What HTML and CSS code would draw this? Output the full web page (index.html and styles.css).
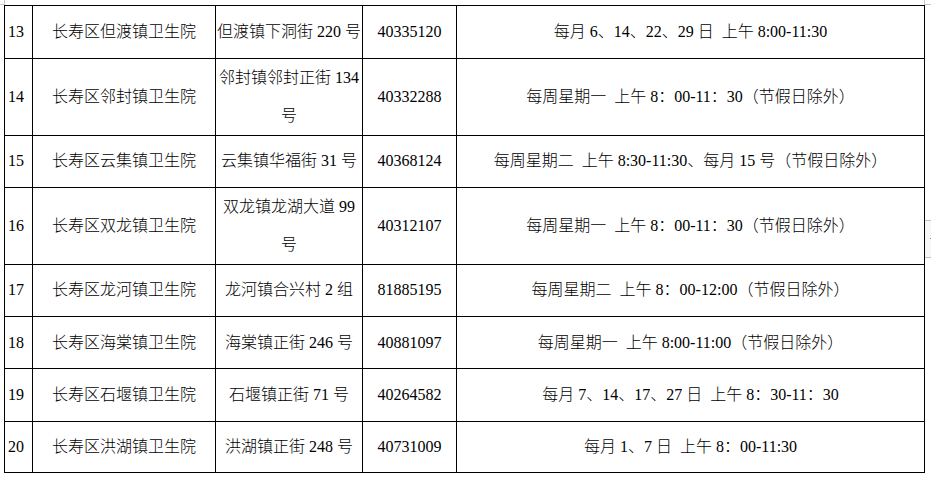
FILE: index.html
```html
<!DOCTYPE html>
<html lang="zh-CN">
<head>
<meta charset="utf-8">
<title>长寿区卫生院</title>
<link rel="stylesheet" href="styles.css">
</head>
<body>
<div class="page">
  <span class="mark mark-tl-v"></span>
  <span class="mark mark-tl-h"></span>
  <span class="mark mark-tr-v"></span>
  <span class="mark mark-tr-h"></span>
  <span class="side-mark"><span class="side-dot"></span></span>
  <div class="table">
    <div class="row">
      <div class="cell num">13</div>
      <div class="cell">长寿区但渡镇卫生院</div>
      <div class="cell addr">但渡镇下洞街 220 号</div>
      <div class="cell">40335120</div>
      <div class="cell">每月 6、14、22、29 日&nbsp; 上午 8:00-11:30</div>
    </div>
    <div class="row tall">
      <div class="cell num">14</div>
      <div class="cell">长寿区邻封镇卫生院</div>
      <div class="cell addr">邻封镇邻封正街 134 号</div>
      <div class="cell">40332288</div>
      <div class="cell">每周星期一&nbsp; 上午 8：00-11：30（节假日除外）</div>
    </div>
    <div class="row">
      <div class="cell num">15</div>
      <div class="cell">长寿区云集镇卫生院</div>
      <div class="cell addr">云集镇华福街 31 号</div>
      <div class="cell">40368124</div>
      <div class="cell">每周星期二&nbsp; 上午 8:30-11:30、每月 15 号（节假日除外）</div>
    </div>
    <div class="row tall">
      <div class="cell num">16</div>
      <div class="cell">长寿区双龙镇卫生院</div>
      <div class="cell addr">双龙镇龙湖大道 99 号</div>
      <div class="cell">40312107</div>
      <div class="cell">每周星期一&nbsp; 上午 8：00-11：30（节假日除外）</div>
    </div>
    <div class="row">
      <div class="cell num">17</div>
      <div class="cell">长寿区龙河镇卫生院</div>
      <div class="cell addr">龙河镇合兴村 2 组</div>
      <div class="cell">81885195</div>
      <div class="cell">每周星期二&nbsp; 上午 8：00-12:00（节假日除外）</div>
    </div>
    <div class="row short">
      <div class="cell num">18</div>
      <div class="cell">长寿区海棠镇卫生院</div>
      <div class="cell addr">海棠镇正街 246 号</div>
      <div class="cell">40881097</div>
      <div class="cell">每周星期一&nbsp; 上午 8:00-11:00（节假日除外）</div>
    </div>
    <div class="row">
      <div class="cell num">19</div>
      <div class="cell">长寿区石堰镇卫生院</div>
      <div class="cell addr">石堰镇正街 71 号</div>
      <div class="cell">40264582</div>
      <div class="cell">每月 7、14、17、27 日&nbsp; 上午 8：30-11：30</div>
    </div>
    <div class="row last">
      <div class="cell num">20</div>
      <div class="cell">长寿区洪湖镇卫生院</div>
      <div class="cell addr">洪湖镇正街 248 号</div>
      <div class="cell">40731009</div>
      <div class="cell">每月 1、7 日&nbsp; 上午 8：00-11:30</div>
    </div>
  </div>
</div>
</body>
</html>
```

FILE: styles.css
```css
html, body {
  margin: 0;
  padding: 0;
  background: #ffffff;
}

body {
  font-family: "Liberation Serif", "Noto Sans CJK SC", serif;
  font-size: 16px;
  font-weight: 300;
  color: #000000;
}

.page {
  position: relative;
  width: 931px;
  height: 478px;
  padding: 5px 0 0 4px;
  box-sizing: border-box;
}

.mark {
  position: absolute;
  background: #c8c8c8;
}
.mark-tl-v { left: 4px; top: 0; width: 1px; height: 5px; }
.mark-tl-h { left: 0; top: 4px; width: 4px; height: 1px; }
.mark-tr-v { left: 924px; top: 0; width: 1px; height: 5px; }
.mark-tr-h { left: 925px; top: 4px; width: 6px; height: 1px; }

.side-mark {
  position: absolute;
  left: 925px;
  top: 220px;
  width: 6px;
  height: 36px;
  border-top: 1px solid #c0c0c0;
  border-bottom: 1px solid #c0c0c0;
  background: #f7f7f7;
}
.side-dot {
  position: absolute;
  left: 5px;
  top: 17px;
  width: 1px;
  height: 1px;
  background: #888888;
}

.table {
  width: 921px;
  border-top: 1px solid #000;
  border-left: 1px solid #000;
  box-sizing: border-box;
}

.row {
  display: grid;
  grid-template-columns: 28px 183px 147px 94px 468px;
  height: 53px;
}
.row.tall { height: 76px; }
.row.short { height: 52px; }
.row.last { height: 51px; }

.cell {
  box-sizing: border-box;
  border-right: 1px solid #000;
  border-bottom: 1px solid #000;
  display: flex;
  align-items: center;
  justify-content: center;
  text-align: center;
  line-height: 38px;
  white-space: nowrap;
}

.cell.num {
  justify-content: flex-start;
  padding-left: 3px;
}

.cell.addr {
  white-space: normal;
  padding: 0 1px;
}
```
